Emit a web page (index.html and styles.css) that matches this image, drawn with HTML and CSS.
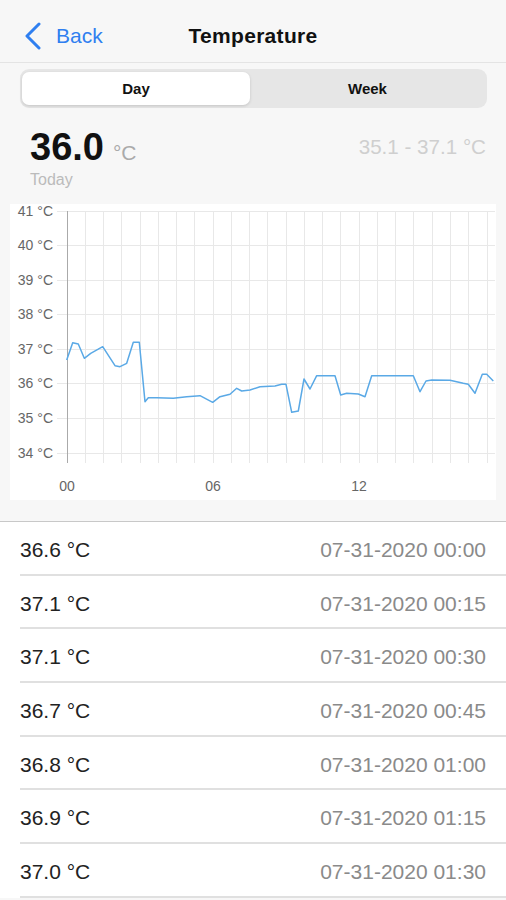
FILE: index.html
```html
<!DOCTYPE html>
<html lang="en">
<head>
  <meta charset="UTF-8" />
  <title>Temperature</title>
  <link rel="stylesheet" href="styles.css">
</head>
<body>

<header class="topbar">
  <a class="back" href="#">
    <svg class="chevron" width="18" height="28" viewBox="0 0 18 28">
      <polyline points="15,2 3,14 15,26" fill="none" stroke="#2f7ff0" stroke-width="3" stroke-linecap="round" stroke-linejoin="round"/>
    </svg>
    <span>Back</span>
  </a>
  <h1 class="title">Temperature</h1>
  <span></span>
</header>

<!-- Day / Week switch -->
<div class="segment">
  <button class="seg-btn active">Day</button>
  <button class="seg-btn">Week</button>
</div>

<!-- Summary -->
<section class="summary">
  <div>
    <div class="current">36.0<span class="unit">°C</span></div>
    <div class="today">Today</div>
  </div>
  <div class="range">35.1 - 37.1 °C</div>
</section>

<!-- Chart -->
<div class="chart">
  <svg width="486" height="296" viewBox="10 204 486 296">
    <g class="grid">
      <line x1="57" y1="211.5" x2="495" y2="211.5"/>
      <line x1="57" y1="245.5" x2="495" y2="245.5"/>
      <line x1="57" y1="280.5" x2="495" y2="280.5"/>
      <line x1="57" y1="314.5" x2="495" y2="314.5"/>
      <line x1="57" y1="349.5" x2="495" y2="349.5"/>
      <line x1="57" y1="383.5" x2="495" y2="383.5"/>
      <line x1="57" y1="418.5" x2="495" y2="418.5"/>
      <line x1="57" y1="453.5" x2="495" y2="453.5"/>

      <line x1="85.5" y1="211" x2="85.5" y2="463"/>
      <line x1="103.5" y1="211" x2="103.5" y2="463"/>
      <line x1="121.5" y1="211" x2="121.5" y2="463"/>
      <line x1="140.5" y1="211" x2="140.5" y2="463"/>
      <line x1="158.5" y1="211" x2="158.5" y2="463"/>
      <line x1="176.5" y1="211" x2="176.5" y2="463"/>
      <line x1="194.5" y1="211" x2="194.5" y2="463"/>
      <line x1="213.5" y1="211" x2="213.5" y2="463"/>
      <line x1="231.5" y1="211" x2="231.5" y2="463"/>
      <line x1="249.5" y1="211" x2="249.5" y2="463"/>
      <line x1="267.5" y1="211" x2="267.5" y2="463"/>
      <line x1="286.5" y1="211" x2="286.5" y2="463"/>
      <line x1="304.5" y1="211" x2="304.5" y2="463"/>
      <line x1="322.5" y1="211" x2="322.5" y2="463"/>
      <line x1="340.5" y1="211" x2="340.5" y2="463"/>
      <line x1="359.5" y1="211" x2="359.5" y2="463"/>
      <line x1="377.5" y1="211" x2="377.5" y2="463"/>
      <line x1="395.5" y1="211" x2="395.5" y2="463"/>
      <line x1="413.5" y1="211" x2="413.5" y2="463"/>
      <line x1="432.5" y1="211" x2="432.5" y2="463"/>
      <line x1="450.5" y1="211" x2="450.5" y2="463"/>
      <line x1="468.5" y1="211" x2="468.5" y2="463"/>
      <line x1="487.5" y1="211" x2="487.5" y2="463"/>
    </g>
    <line class="axis" x1="67.5" y1="211" x2="67.5" y2="463"/>

    <g class="ylabels">
      <text x="53" y="216">41 °C</text>
      <text x="53" y="250">40 °C</text>
      <text x="53" y="285">39 °C</text>
      <text x="53" y="319">38 °C</text>
      <text x="53" y="354">37 °C</text>
      <text x="53" y="388">36 °C</text>
      <text x="53" y="423">35 °C</text>
      <text x="53" y="458">34 °C</text>
    </g>
    <g class="xlabels">
      <text x="67" y="491">00</text>
      <text x="213" y="491">06</text>
      <text x="359" y="491">12</text>
    </g>

    <polyline class="line" points="66.7,360 72.7,342.7 78.3,344 84.3,358.3 90.7,353.3 102.7,346.7 115,365.7 120,366.7 126.7,363.3 133.3,342.3 139.3,342.3 145,401.7 148.3,397.7 156.7,397.7 173.3,398.3 186.7,396.7 200,395.7 212.7,402.3 220,396.7 230,394.3 236.7,388.3 241.7,391 250,390 260,386.7 275,386 281.7,384.3 286,384.3 291.7,412.3 298.3,411 304,379 310,389 316.7,375.7 335,375.7 340.7,395 346.7,393.3 358.3,394 365,396.7 371.7,375.7 413.3,375.7 420,391.7 426,381 431.7,380 450,380.3 463.3,383.3 468.3,384.3 475,393.3 482.3,374.3 486.7,374.3 493.3,381"/>
  </svg>
</div>

<!-- Readings -->
<ul class="readings">
  <li><span class="value">36.6 °C</span><span class="time">07-31-2020 00:00</span></li>
  <li><span class="value">37.1 °C</span><span class="time">07-31-2020 00:15</span></li>
  <li><span class="value">37.1 °C</span><span class="time">07-31-2020 00:30</span></li>
  <li><span class="value">36.7 °C</span><span class="time">07-31-2020 00:45</span></li>
  <li><span class="value">36.8 °C</span><span class="time">07-31-2020 01:00</span></li>
  <li><span class="value">36.9 °C</span><span class="time">07-31-2020 01:15</span></li>
  <li><span class="value">37.0 °C</span><span class="time">07-31-2020 01:30</span></li>
</ul>

</body>
</html>
```

FILE: styles.css
```css
body {
  margin: 0;
  background: #f7f7f7;
  font-family: 'Liberation Sans', Arial, sans-serif;
  color: #111;
  overflow: hidden;
}
.topbar {
  display: grid;
  grid-template-columns: 1fr auto 1fr;
  align-items: center;
  height: 52px;
  padding-top: 10px;
  border-bottom: 1px solid #e4e4e4;
}
.back {
  display: flex;
  align-items: center;
  padding-left: 24px;
  color: #2f7ff0;
  text-decoration: none;
  font-size: 21px;
}
.chevron {
  margin-right: 14px;
}
.title {
  margin: 0;
  font-size: 21px;
  font-weight: bold;
  letter-spacing: 0.3px;
  color: #111;
}
.segment {
  display: flex;
  margin: 6px 19px 0 20px;
  height: 39px;
  padding: 3px 2px;
  box-sizing: border-box;
  background: #e6e6e6;
  border-radius: 9px;
}
.seg-btn {
  flex: 1;
  border: none;
  background: transparent;
  font-family: inherit;
  font-size: 15px;
  font-weight: bold;
  color: #111;
  border-radius: 7px;
}
.seg-btn.active {
  flex: 0 0 228px;
  background: white;
  box-shadow: 0 1px 3px rgba(0, 0, 0, 0.15);
}
.summary {
  display: flex;
  justify-content: space-between;
  align-items: flex-start;
  margin-top: 20px;
  padding: 0 20px 0 30px;
}
.current {
  font-size: 38px;
  line-height: 38px;
  font-weight: bold;
}
.unit {
  margin-left: 9px;
  font-size: 21px;
  line-height: 1;
  font-weight: normal;
  color: #aaa;
}
.today {
  margin-top: 5px;
  font-size: 16px;
  line-height: 18px;
  color: #bbb;
}
.range {
  margin-top: 9px;
  font-size: 20.6px;
  line-height: 20px;
  color: #cfcfcf;
}
.chart {
  margin: 15px 10px 0;
  height: 296px;
  background: white;
}
.chart svg {
  display: block;
}
.grid line {
  stroke: #e8e8e8;
  stroke-width: 1;
}
.axis {
  stroke: #aaa;
  stroke-width: 1;
}
.ylabels text {
  font-size: 14px;
  fill: #666;
  text-anchor: end;
}
.xlabels text {
  font-size: 14px;
  fill: #666;
  text-anchor: middle;
}
.line {
  fill: none;
  stroke: #5aa9e6;
  stroke-width: 1.5;
  stroke-linejoin: round;
}
.readings {
  list-style: none;
  margin: 21px 0 0;
  padding: 0;
  background: white;
  border-top: 1px solid #c8c8c8;
}
.readings li {
  display: flex;
  justify-content: space-between;
  align-items: center;
  height: 53.7px;
  box-sizing: border-box;
  margin-left: 20px;
  padding: 4px 20px 0 0;
  border-bottom: 2px solid #e0e0e0;
  font-size: 21px;
}
.value {
  color: #222;
}
.time {
  color: #8a8a8a;
}
```
